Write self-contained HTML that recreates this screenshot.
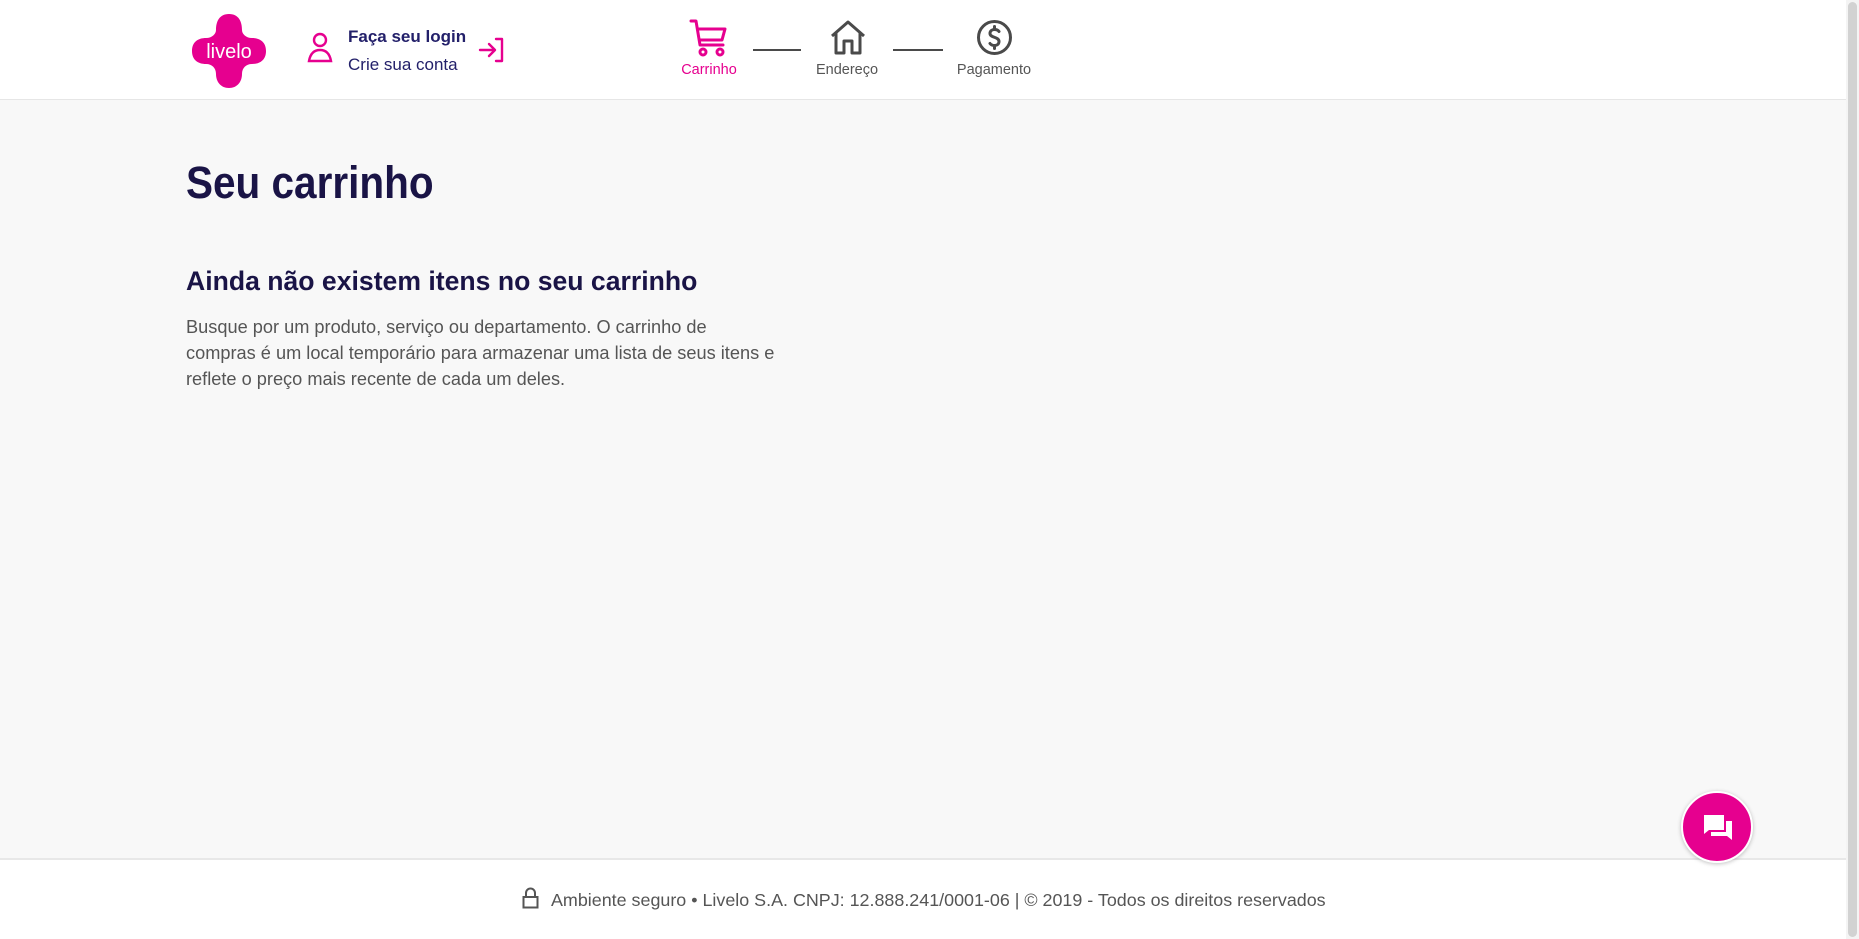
<!DOCTYPE html>
<html><head><meta charset="utf-8">
<style>
*{margin:0;padding:0;box-sizing:border-box}
html,body{width:1859px;height:939px;overflow:hidden}
body{background:#f8f8f8;font-family:"Liberation Sans",sans-serif;position:relative}
.hdr{position:absolute;left:0;top:0;width:1846px;height:100px;background:#fff;border-bottom:1px solid #e6e6e6}
.abs{position:absolute}
.login{font-size:17px;color:#23206a;line-height:1}
.step{position:absolute;font-size:14.5px;color:#555;text-align:center;width:120px}
.line{position:absolute;height:2px;background:#4a4a4a;top:49px}
h1{position:absolute;left:186px;top:158px;font-size:45px;font-weight:bold;color:#1a1446;transform:scaleX(.9);transform-origin:left;white-space:nowrap;line-height:50px}
h2{position:absolute;left:186px;top:264px;font-size:27px;font-weight:bold;color:#1a1446;transform:scaleX(.985);transform-origin:left;white-space:nowrap;line-height:34px}
.body{position:absolute;left:186px;top:314px;font-size:18.2px;line-height:26px;color:#555;white-space:nowrap}
.ftr{position:absolute;left:0;top:858px;width:1846px;height:81px;background:#fff;border-top:2px solid #e8e8e8}
.ftxt{position:absolute;left:551px;top:30px;font-size:17.9px;color:#555;white-space:nowrap}
.chat{position:absolute;left:1681px;top:791px;width:72px;height:72px;border-radius:50%;background:#e6008f;border:2px solid #fff;box-shadow:0 1px 4px rgba(0,0,0,.25)}
.sb{position:absolute;left:1846px;top:0;width:13px;height:939px;background:#f4f4f4}
.sb div{position:absolute;left:2px;top:2px;width:9px;height:935px;border-radius:5px;background:#d2d2d2}
</style></head><body>
<div class="hdr">
  <svg class="abs" style="left:190px;top:12px" width="78" height="78" viewBox="0 0 78 78">
    <path d="M39 2C49 2 52 10 52 18C52 22 56 26 62 26C70 26 76 30 76 39C76 48 70 52 62 52C56 52 52 56 52 62C52 70 47 76 39 76C31 76 26 70 26 62C26 56 22 52 16 52C8 52 2 48 2 39C2 30 8 26 16 26C22 26 26 22 26 18C26 10 29 2 39 2Z" fill="#e6008f"/>
    <text x="39" y="46" text-anchor="middle" font-family="Liberation Sans" font-size="20" fill="#fff">livelo</text>
  </svg>
  <svg class="abs" style="left:306px;top:32px" width="28" height="32" viewBox="0 0 28 32" fill="none" stroke="#e6008f" stroke-width="2.4">
    <circle cx="14" cy="8" r="6"/><path d="M3 29 Q5 18 14 18 Q23 18 25 29 Z"/>
  </svg>
  <div class="abs login" style="left:348px;top:28px;font-weight:bold">Faça seu login</div>
  <div class="abs login" style="left:348px;top:56px">Crie sua conta</div>
  <svg class="abs" style="left:478px;top:36px" width="28" height="28" viewBox="0 0 28 28" fill="none" stroke="#e6008f" stroke-width="2.4" stroke-linecap="round" stroke-linejoin="round">
    <path d="M2 14H16M11 8L17 14L11 20"/><path d="M18 3H24V25H18"/>
  </svg>
  <svg class="abs" style="left:689px;top:18px" width="40" height="40" viewBox="0 0 40 40" fill="none" stroke="#e6008f" stroke-width="3" stroke-linecap="round" stroke-linejoin="round">
    <path d="M2 3H7L11 27H34"/><path d="M9 11H36L33 22H11"/><circle cx="14" cy="34" r="3"/><circle cx="31" cy="34" r="3"/>
  </svg>
  <div class="step" style="left:649px;top:62px;color:#e6008f">Carrinho</div>
  <div class="line" style="left:753px;width:48px"></div>
  <svg class="abs" style="left:829px;top:19px" width="38" height="36" viewBox="0 0 38 36" fill="none" stroke="#4a4a4a" stroke-width="3" stroke-linejoin="round">
    <path d="M3 17L19 3L35 17"/><path d="M7 14V34H15V22H23V34H31V14"/>
  </svg>
  <div class="step" style="left:787px;top:62px">Endereço</div>
  <div class="line" style="left:893px;width:50px"></div>
  <svg class="abs" style="left:976px;top:19px" width="37" height="37" viewBox="0 0 37 37" fill="none" stroke="#4a4a4a" stroke-width="3" stroke-linecap="round">
    <circle cx="18.5" cy="18.5" r="16"/><path d="M23 12.5C22 11 20.5 10.5 18.5 10.5C16 10.5 14 12 14 14.5C14 19 23 17.5 23 22.5C23 25 21 26.5 18.5 26.5C16.5 26.5 15 25.8 14 24.5M18.5 7.5V10.5M18.5 26.5V29.5"/>
  </svg>
  <div class="step" style="left:934px;top:62px">Pagamento</div>
</div>
<h1>Seu carrinho</h1>
<h2>Ainda não existem itens no seu carrinho</h2>
<div class="body">Busque por um produto, serviço ou departamento. O carrinho de<br>compras é um local temporário para armazenar uma lista de seus itens e<br>reflete o preço mais recente de cada um deles.</div>
<div class="ftr">
  <svg class="abs" style="left:522px;top:27px" width="17" height="22" viewBox="0 0 17 22" fill="none" stroke="#555" stroke-width="2">
    <path d="M4 10V6A4.5 4.5 0 0 1 13 6V10"/><rect x="1.5" y="10" width="14" height="10.5"/>
  </svg>
  <div class="ftxt">Ambiente seguro • Livelo S.A. CNPJ: 12.888.241/0001-06 | © 2019 - Todos os direitos reservados</div>
</div>
<div class="chat">
  <svg class="abs" style="left:19px;top:20px" width="32" height="30" viewBox="0 0 32 30" fill="#fff">
    <path d="M2 2H22V17H7L2 21Z"/><path d="M24 8H30V27L25 23H9V19H24Z"/>
  </svg>
</div>
<div class="sb"><div></div></div>
</body></html>
